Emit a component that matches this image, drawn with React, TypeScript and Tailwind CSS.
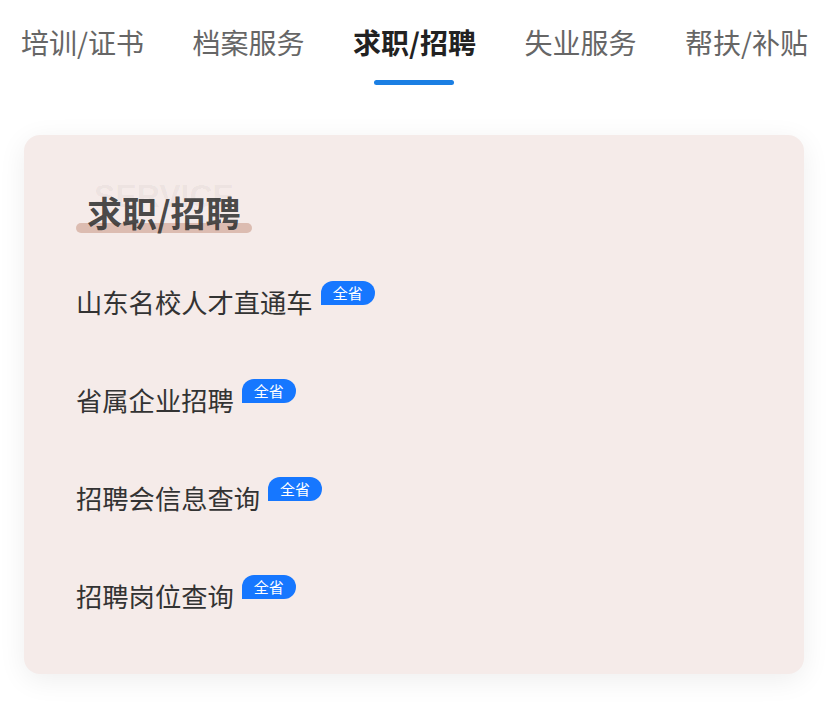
import React from 'react';

const tabs = ['培训/证书', '档案服务', '求职/招聘', '失业服务', '帮扶/补贴'];
const items = ['山东名校人才直通车', '省属企业招聘', '招聘会信息查询', '招聘岗位查询'];

export default function App() {
  const active = 2;
  return (
    <div className="w-[828px] h-[715px] bg-white overflow-hidden" style={{ fontFamily: '"Noto Sans CJK SC", "Noto Sans", sans-serif' }}>
      <div className="flex justify-between pl-[21px] pr-[20px] pt-[22px]">
        {tabs.map((t, i) => (
          <div key={t} className="flex flex-col items-center">
            <span className={`text-[28px] leading-[40px] ${i === active ? 'font-bold text-[#222]' : 'text-[#666]'}`}>{t}</span>
            <div className={`mt-[18px] w-[80px] h-[5px] rounded-full ${i === active ? 'bg-[#1b7fe3]' : 'bg-transparent'}`} />
          </div>
        ))}
      </div>

      <div className="mx-[24px] mt-[50px] h-[539px] rounded-[16px] bg-[#f5ebe9] shadow-[0_6px_28px_rgba(0,0,0,0.07)] pt-[57px] px-[52px]">
        <div className="relative inline-block">
          <span className="absolute left-[18px] top-[-12px] text-[32px] font-bold leading-[32px] text-black/[0.045]" style={{ fontFamily: '"Liberation Sans", sans-serif' }}>SERVICE</span>
          <div className="absolute left-0 right-0 top-[31px] h-[10px] rounded-full bg-[#dcbcb1]" />
          <span className="relative block pl-[11px] pr-[11px] text-[35px] font-bold leading-[40px] text-[#333]/90">求职/招聘</span>
        </div>

        <div className="mt-[54px] flex flex-col gap-[66px]">
          {items.map(it => (
            <div key={it} className="flex items-start">
              <span className="text-[26.3px] leading-[32px] text-[#333]">{it}</span>
              <span className="ml-[8px] -mt-[5px] h-[24px] px-[12px] rounded-t-[12px] rounded-br-[12px] bg-[#1677ff] text-white text-[15px] leading-[24px]">全省</span>
            </div>
          ))}
        </div>
      </div>
    </div>
  );
}
